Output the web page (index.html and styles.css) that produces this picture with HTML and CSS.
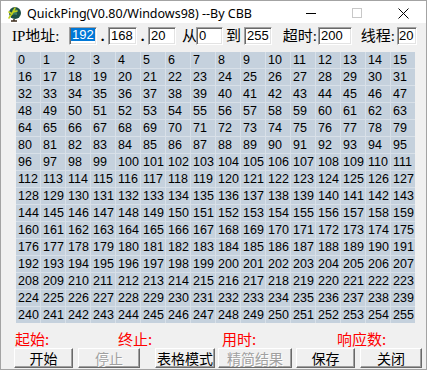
FILE: index.html
```html
<!DOCTYPE html>
<html lang="zh-CN">
<head>
<meta charset="utf-8">
<title>QuickPing</title>
<link rel="stylesheet" href="styles.css">
</head>
<body>
<div class="window">
  <div class="titlebar">
    <svg class="app-icon" viewBox="0 0 16 16" width="16" height="16">
      <circle cx="9" cy="7" r="6" fill="#1d4f45"/>
      <path d="M6 4 Q9 2 12 4 Q10 6 11 9 Q8 8 6 9 Z" fill="#3f7f5f"/>
      <path d="M3 12 L7 6 L9 2 M7 6 L11 5 M6 8 L3 6" stroke="#c4d21e" stroke-width="1.6" fill="none" stroke-linecap="round"/>
      <path d="M8 13 L8 15 M5 15 L11 15" stroke="#3b2a1a" stroke-width="1.4"/>
    </svg>
    <span class="title">QuickPing(V0.80/Windows98) --By CBB</span>
    <div class="caption-btns">
      <span class="cap"><svg width="10" height="10" viewBox="0 0 10 10"><rect x="0" y="5" width="10" height="1" fill="#000"/></svg></span>
      <span class="cap"><svg width="10" height="10" viewBox="0 0 10 10"><rect x="0.5" y="0.5" width="9" height="9" fill="none" stroke="#c8c8c8"/></svg></span>
      <span class="cap"><svg width="11" height="11" viewBox="0 0 11 11"><path d="M0.5 0.5 L10.5 10.5 M10.5 0.5 L0.5 10.5" stroke="#000" stroke-width="1"/></svg></span>
    </div>
  </div>
  <div class="client">
    <div class="ip-row">
      <span class="lbl lbl-ip">IP地址:</span>
      <span class="box w28 tight"><span class="sel">192</span></span>
      <span class="lbl sep">.</span>
      <span class="box w29">168</span>
      <span class="lbl sep">.</span>
      <span class="box w28">20</span>
      <span class="lbl lbl-from">从</span>
      <span class="box w27">0</span>
      <span class="lbl lbl-to">到</span>
      <span class="box w28">255</span>
      <span class="lbl lbl-timeout">超时:</span>
      <span class="box w34">200</span>
      <span class="lbl lbl-threads">线程:</span>
      <span class="box w20 tight">20</span>
    </div>
    <div class="grid">
      <span>0</span><span>1</span><span>2</span><span>3</span><span>4</span><span>5</span><span>6</span><span>7</span><span>8</span><span>9</span><span>10</span><span>11</span><span>12</span><span>13</span><span>14</span><span>15</span>
      <span>16</span><span>17</span><span>18</span><span>19</span><span>20</span><span>21</span><span>22</span><span>23</span><span>24</span><span>25</span><span>26</span><span>27</span><span>28</span><span>29</span><span>30</span><span>31</span>
      <span>32</span><span>33</span><span>34</span><span>35</span><span>36</span><span>37</span><span>38</span><span>39</span><span>40</span><span>41</span><span>42</span><span>43</span><span>44</span><span>45</span><span>46</span><span>47</span>
      <span>48</span><span>49</span><span>50</span><span>51</span><span>52</span><span>53</span><span>54</span><span>55</span><span>56</span><span>57</span><span>58</span><span>59</span><span>60</span><span>61</span><span>62</span><span>63</span>
      <span>64</span><span>65</span><span>66</span><span>67</span><span>68</span><span>69</span><span>70</span><span>71</span><span>72</span><span>73</span><span>74</span><span>75</span><span>76</span><span>77</span><span>78</span><span>79</span>
      <span>80</span><span>81</span><span>82</span><span>83</span><span>84</span><span>85</span><span>86</span><span>87</span><span>88</span><span>89</span><span>90</span><span>91</span><span>92</span><span>93</span><span>94</span><span>95</span>
      <span>96</span><span>97</span><span>98</span><span>99</span><span>100</span><span>101</span><span>102</span><span>103</span><span>104</span><span>105</span><span>106</span><span>107</span><span>108</span><span>109</span><span>110</span><span>111</span>
      <span>112</span><span>113</span><span>114</span><span>115</span><span>116</span><span>117</span><span>118</span><span>119</span><span>120</span><span>121</span><span>122</span><span>123</span><span>124</span><span>125</span><span>126</span><span>127</span>
      <span>128</span><span>129</span><span>130</span><span>131</span><span>132</span><span>133</span><span>134</span><span>135</span><span>136</span><span>137</span><span>138</span><span>139</span><span>140</span><span>141</span><span>142</span><span>143</span>
      <span>144</span><span>145</span><span>146</span><span>147</span><span>148</span><span>149</span><span>150</span><span>151</span><span>152</span><span>153</span><span>154</span><span>155</span><span>156</span><span>157</span><span>158</span><span>159</span>
      <span>160</span><span>161</span><span>162</span><span>163</span><span>164</span><span>165</span><span>166</span><span>167</span><span>168</span><span>169</span><span>170</span><span>171</span><span>172</span><span>173</span><span>174</span><span>175</span>
      <span>176</span><span>177</span><span>178</span><span>179</span><span>180</span><span>181</span><span>182</span><span>183</span><span>184</span><span>185</span><span>186</span><span>187</span><span>188</span><span>189</span><span>190</span><span>191</span>
      <span>192</span><span>193</span><span>194</span><span>195</span><span>196</span><span>197</span><span>198</span><span>199</span><span>200</span><span>201</span><span>202</span><span>203</span><span>204</span><span>205</span><span>206</span><span>207</span>
      <span>208</span><span>209</span><span>210</span><span>211</span><span>212</span><span>213</span><span>214</span><span>215</span><span>216</span><span>217</span><span>218</span><span>219</span><span>220</span><span>221</span><span>222</span><span>223</span>
      <span>224</span><span>225</span><span>226</span><span>227</span><span>228</span><span>229</span><span>230</span><span>231</span><span>232</span><span>233</span><span>234</span><span>235</span><span>236</span><span>237</span><span>238</span><span>239</span>
      <span>240</span><span>241</span><span>242</span><span>243</span><span>244</span><span>245</span><span>246</span><span>247</span><span>248</span><span>249</span><span>250</span><span>251</span><span>252</span><span>253</span><span>254</span><span>255</span>
    </div>
    <div class="status-row">
      <span>起始:</span>
      <span>终止:</span>
      <span>用时:</span>
      <span>响应数:</span>
    </div>
    <div class="btn-row">
      <span class="btn b-start">开始</span>
      <span class="btn b-stop disabled">停止</span>
      <span class="btn b-table">表格模式</span>
      <span class="btn b-brief disabled">精简结果</span>
      <span class="btn b-save">保存</span>
      <span class="btn b-close">关闭</span>
    </div>
  </div>
</div>
</body>
</html>
```
FILE: styles.css
```css
html, body {
  margin: 0;
  padding: 0;
  background: #ffffff;
}

.window {
  width: 427px;
  height: 370px;
  box-sizing: border-box;
  border: 1px solid #a3a3a3;
  background: #f0f0f0;
  display: flex;
  flex-direction: column;
}

.titlebar {
  height: 22px;
  background: #ffffff;
  display: flex;
  align-items: center;
}

.app-icon {
  margin-left: 5px;
  margin-top: 3px;
  flex: none;
}

.title {
  margin-left: 5px;
  margin-top: 2px;
  font-family: "Noto Sans", sans-serif;
  font-size: 12.5px;
  color: #000000;
  white-space: nowrap;
}

.caption-btns {
  margin-left: auto;
  display: flex;
  height: 22px;
}

.cap {
  width: 46px;
  height: 22px;
  display: flex;
  align-items: center;
  justify-content: center;
  padding-top: 2px;
  box-sizing: border-box;
}

.client {
  padding-top: 4px;
}

.ip-row {
  display: flex;
  align-items: center;
  height: 18px;
  padding-left: 11px;
}

.lbl {
  font-family: "Liberation Serif", "Noto Sans CJK SC", serif;
  font-size: 15px;
  line-height: 18px;
  height: 18px;
  color: #000000;
  box-sizing: border-box;
  white-space: nowrap;
  flex: none;
}

.lbl-ip { width: 57px; }
.sep { width: 11px; text-align: center; font-weight: bold; }
.lbl-from { width: 20px; padding-left: 6px; }
.lbl-to { width: 21px; text-align: center; }
.lbl-timeout { width: 46px; text-align: right; padding-right: 1px; }
.lbl-threads { width: 45px; text-align: right; padding-right: 2px; }

.box {
  height: 18px;
  box-sizing: border-box;
  background: #ffffff;
  border: 1px solid;
  border-color: #a0a0a0 #ffffff #ffffff #a0a0a0;
  box-shadow: inset 1px 1px 0 #696969, inset -1px -1px 0 #e3e3e3;
  font-family: "Liberation Sans", sans-serif;
  font-size: 13px;
  line-height: 16px;
  padding-left: 2px;
  color: #000000;
  flex: none;
  overflow: hidden;
  white-space: nowrap;
}

.box.tight { padding-left: 1px; }

.sel {
  display: inline-block;
  background: #0078d7;
  color: #ffffff;
  line-height: 13px;
  padding: 0 1px 0 1px;
  vertical-align: 1px;
}

.w20 { width: 20px; }
.w27 { width: 27px; }
.w28 { width: 28px; }
.w29 { width: 29px; }
.w34 { width: 34px; }

.grid {
  margin: 7px 0 0 15px;
  width: 399px;
  display: grid;
  grid-template-columns: repeat(16, 24px);
  grid-auto-rows: 16px;
  gap: 1px;
  background: #d8e0e8;
}

.grid span {
  background: #c5d1dd;
  font-family: "Liberation Sans", sans-serif;
  font-size: 12.5px;
  line-height: 16px;
  padding-left: 2px;
  color: #000000;
  white-space: nowrap;
}

.status-row {
  margin-top: 7px;
  height: 17px;
  padding-left: 14px;
  display: grid;
  grid-template-columns: 103px 104px 115px auto;
  font-family: "Noto Sans CJK SC", sans-serif;
  font-size: 15px;
  line-height: 17px;
  color: #ff0000;
}

.btn-row {
  margin-top: 1px;
  height: 20px;
  padding-left: 13px;
  display: flex;
}

.btn {
  height: 20px;
  box-sizing: border-box;
  border: 1px solid;
  border-color: #ffffff #696969 #696969 #ffffff;
  box-shadow: inset -1px -1px 0 #a0a0a0;
  background: #f0f0f0;
  font-family: "Noto Sans CJK SC", sans-serif;
  font-size: 14px;
  line-height: 18px;
  text-align: center;
  color: #000000;
  flex: none;
  white-space: nowrap;
}

.btn.disabled {
  color: #a0a0a0;
  text-shadow: 1px 1px 0 #ffffff;
}

.b-start { width: 59px; }
.b-stop { width: 62px; margin-left: 5px; }
.b-table { width: 60px; margin-left: 15px; }
.b-brief { width: 74px; margin-left: 3px; }
.b-save { width: 59px; margin-left: 4px; }
.b-close { width: 62px; margin-left: 5px; }
```
